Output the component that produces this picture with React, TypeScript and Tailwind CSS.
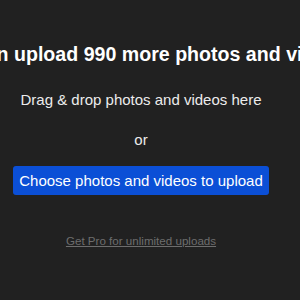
import React from 'react';

function App() {
  return (
    <div className="h-[300px] w-[300px] overflow-hidden bg-[#212121]">
      <div
        className="flex w-[282px] flex-col items-center text-white"
        style={{ fontFamily: '"Liberation Sans", Arial, sans-serif' }}>
        <h1 className="mt-[42px] whitespace-nowrap text-[19.6px] font-bold leading-[24px]">
          You can upload 990 more photos and videos
        </h1>
        <p className="mt-[24px] whitespace-nowrap text-[15px] leading-[20px] text-[#ececec]">
          Drag &amp; drop photos and videos here
        </p>
        <p className="mt-[20px] text-[15px] leading-[20px] text-[#ececec]">or</p>
        <button className="mt-[16px] h-[29px] w-[256px] rounded-[3px] bg-[#0b4fd6] text-[15px] leading-[20px] text-white">
          Choose photos and videos to upload
        </button>
        <a
          href="#"
          className="mt-[38px] whitespace-nowrap text-[11.6px] leading-[16px] text-[#6d6d6d] underline">
          Get Pro for unlimited uploads
        </a>
      </div>
    </div>
  );
}

export default App;
